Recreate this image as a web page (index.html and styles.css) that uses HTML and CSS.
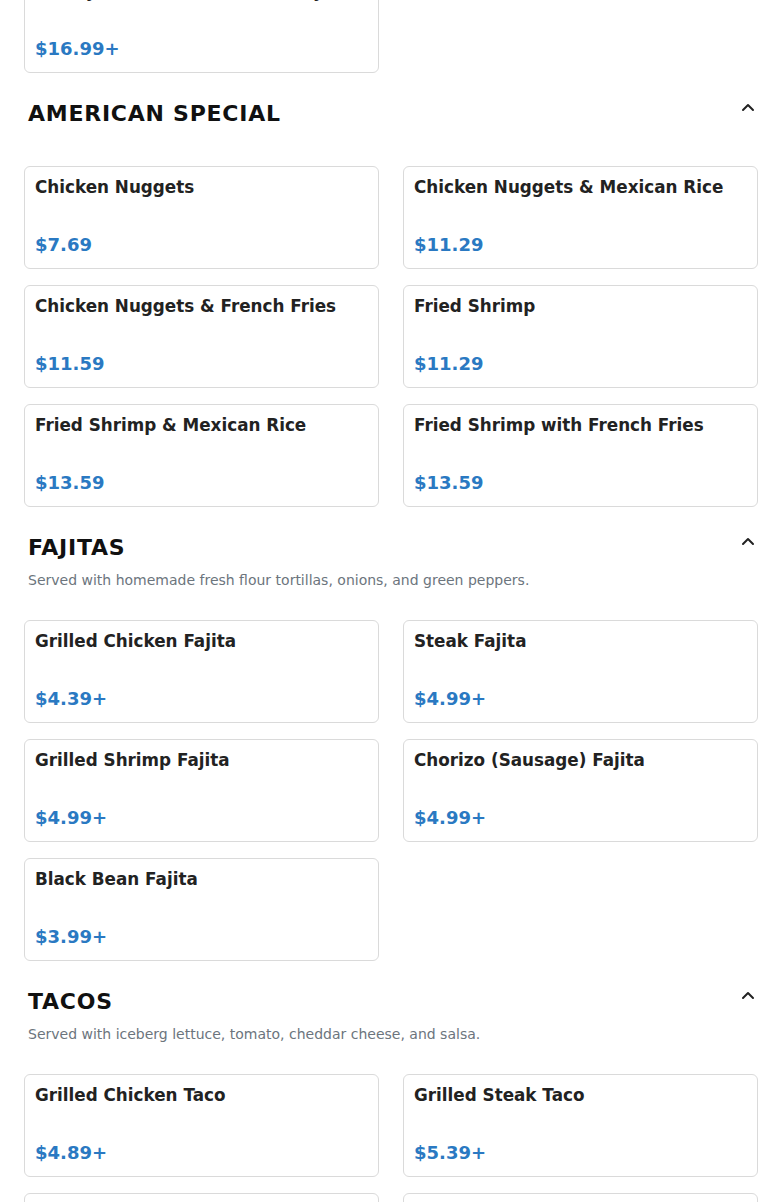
FILE: index.html
```html
<!DOCTYPE html>
<html lang="en">
<head>
<meta charset="utf-8">
<title>Menu</title>
<link rel="stylesheet" href="styles.css">
</head>
<body>
<main class="menu">
  <section class="section section--first">
    <div class="grid grid--flush">
      <div class="card">
        <div class="card-title">Family Platter (Beef, or Turkey)</div>
        <div class="card-price">$16.99+</div>
      </div>
    </div>
  </section>

  <section class="section">
    <div class="section-head">
      <h2 class="section-title">AMERICAN SPECIAL</h2>
      <button class="toggle" aria-label="Collapse"><svg viewBox="0 0 16 16" width="16" height="16"><path d="M3 9 L8 4 L13 9" fill="none" stroke="#222" stroke-width="2" stroke-linecap="round" stroke-linejoin="round"/></svg></button>
    </div>
    <div class="grid">
      <div class="card"><div class="card-title">Chicken Nuggets</div><div class="card-price">$7.69</div></div>
      <div class="card"><div class="card-title">Chicken Nuggets &amp; Mexican Rice</div><div class="card-price">$11.29</div></div>
      <div class="card"><div class="card-title">Chicken Nuggets &amp; French Fries</div><div class="card-price">$11.59</div></div>
      <div class="card"><div class="card-title">Fried Shrimp</div><div class="card-price">$11.29</div></div>
      <div class="card"><div class="card-title">Fried Shrimp &amp; Mexican Rice</div><div class="card-price">$13.59</div></div>
      <div class="card"><div class="card-title">Fried Shrimp with French Fries</div><div class="card-price">$13.59</div></div>
    </div>
  </section>

  <section class="section">
    <div class="section-head">
      <h2 class="section-title">FAJITAS</h2>
      <button class="toggle" aria-label="Collapse"><svg viewBox="0 0 16 16" width="16" height="16"><path d="M3 9 L8 4 L13 9" fill="none" stroke="#222" stroke-width="2" stroke-linecap="round" stroke-linejoin="round"/></svg></button>
    </div>
    <p class="section-desc">Served with homemade fresh flour tortillas, onions, and green peppers.</p>
    <div class="grid">
      <div class="card"><div class="card-title">Grilled Chicken Fajita</div><div class="card-price">$4.39+</div></div>
      <div class="card"><div class="card-title">Steak Fajita</div><div class="card-price">$4.99+</div></div>
      <div class="card"><div class="card-title">Grilled Shrimp Fajita</div><div class="card-price">$4.99+</div></div>
      <div class="card"><div class="card-title">Chorizo (Sausage) Fajita</div><div class="card-price">$4.99+</div></div>
      <div class="card"><div class="card-title">Black Bean Fajita</div><div class="card-price">$3.99+</div></div>
    </div>
  </section>

  <section class="section">
    <div class="section-head">
      <h2 class="section-title">TACOS</h2>
      <button class="toggle" aria-label="Collapse"><svg viewBox="0 0 16 16" width="16" height="16"><path d="M3 9 L8 4 L13 9" fill="none" stroke="#222" stroke-width="2" stroke-linecap="round" stroke-linejoin="round"/></svg></button>
    </div>
    <p class="section-desc">Served with iceberg lettuce, tomato, cheddar cheese, and salsa.</p>
    <div class="grid">
      <div class="card"><div class="card-title">Grilled Chicken Taco</div><div class="card-price">$4.89+</div></div>
      <div class="card"><div class="card-title">Grilled Steak Taco</div><div class="card-price">$5.39+</div></div>
      <div class="card"><div class="card-title">Ground Beef Taco</div><div class="card-price">$4.39+</div></div>
      <div class="card"><div class="card-title">Grilled Shrimp Taco</div><div class="card-price">$5.39+</div></div>
    </div>
  </section>
</main>
</body>
</html>
```

FILE: styles.css
```css
* { box-sizing: border-box; }

html, body {
  margin: 0;
  padding: 0;
  background: #ffffff;
}

body {
  font-family: "DejaVu Sans", "Liberation Sans", sans-serif;
  color: #222;
  overflow: hidden;
}

.menu {
  padding: 0 24px;
  margin-top: -30px;
}

.section {
  padding-top: 28px;
}

.section--first {
  padding-top: 0;
}

.section-head {
  display: flex;
  justify-content: space-between;
  align-items: flex-start;
  padding: 0 2px 9px 4px;
}

.section-title {
  margin: 0;
  font-size: 22px;
  line-height: 26px;
  font-weight: 700;
  letter-spacing: 0.75px;
  color: #111;
}

.toggle {
  border: 0;
  background: transparent;
  padding: 0;
  width: 16px;
  height: 16px;
  display: flex;
  cursor: pointer;
}

.toggle svg { display: block; }

.section-desc {
  margin: 0;
  padding: 0 4px;
  font-size: 14px;
  line-height: 20px;
  color: #6c757d;
}

.grid {
  display: grid;
  grid-template-columns: 1fr 1fr;
  column-gap: 24px;
  row-gap: 16px;
  margin-top: 30px;
}

.grid--flush { margin-top: 0; }

.card {
  display: flex;
  flex-direction: column;
  min-height: 103px;
  padding: 10px 10px 12px;
  border: 1px solid #dadada;
  border-radius: 6px;
  background: #fff;
}

.card-title {
  font-size: 16.8px;
  line-height: 20px;
  font-weight: 700;
  color: #222;
}

.card-price {
  margin-top: auto;
  font-size: 18px;
  line-height: 22px;
  font-weight: 700;
  color: #2a79c2;
}
```
